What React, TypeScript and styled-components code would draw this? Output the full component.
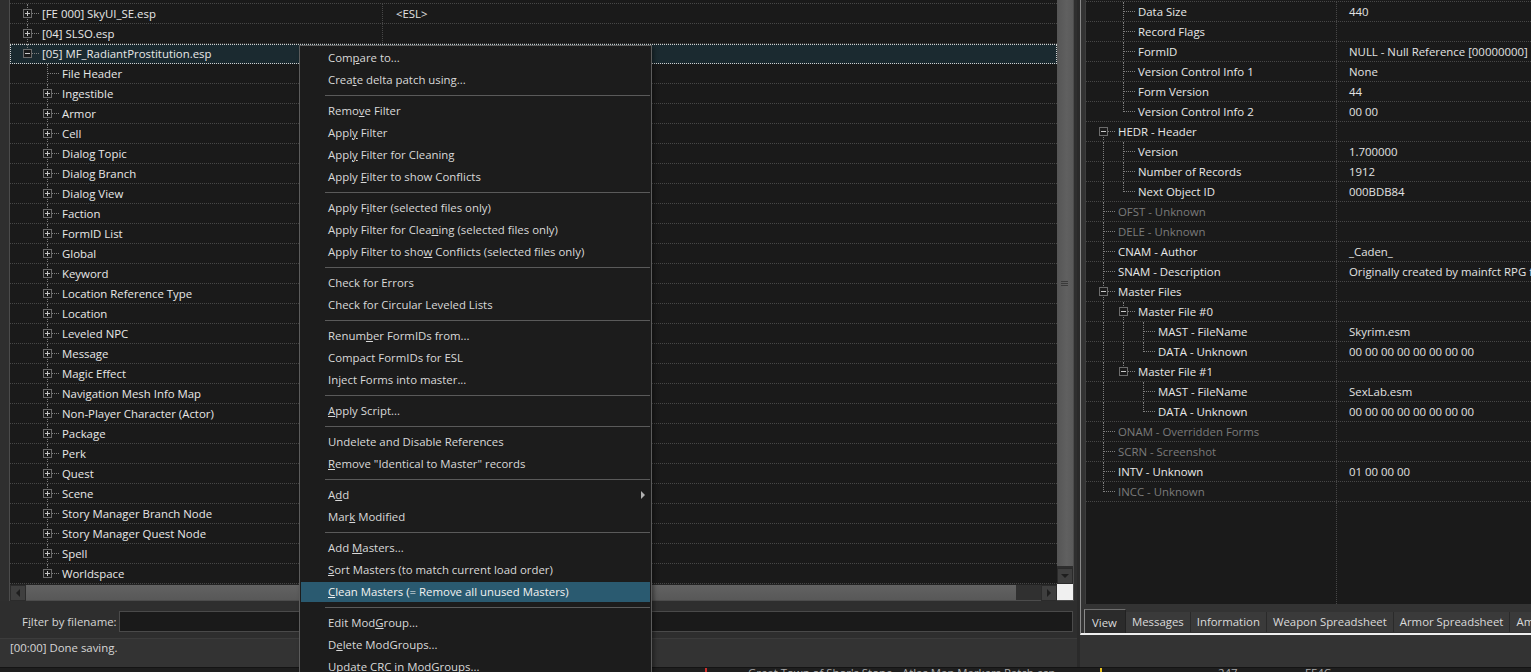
import React from 'react';
import styled, { createGlobalStyle, css } from 'styled-components';

const GlobalStyle = createGlobalStyle`
  html, body {
    margin: 0;
    padding: 0;
    background: #2f2f2f;
  }
  body {
    font-family: "Segoe UI", "Open Sans", "Noto Sans", sans-serif;
    font-size: 11.4px;
    color: #e4e4e4;
  }
  * {
    box-sizing: border-box;
  }
`;

const Window = styled.div`
  position: relative;
  width: 1531px;
  height: 672px;
  overflow: hidden;
  display: flex;
  flex-direction: column;
  background: #2f2f2f;
`;

const Main = styled.div`
  display: flex;
  height: 667px;
`;

const LeftPane = styled.div`
  flex: 0 0 1077px;
  display: flex;
  flex-direction: column;
`;

const Splitter = styled.div`
  flex: 0 0 3px;
  background: #2a2a2a;
`;

const RightColumn = styled.div`
  flex: 1;
  min-width: 0;
  overflow: hidden;
  display: flex;
  flex-direction: column;
  background: #333;
`;

const RightPane = styled.div`
  display: flex;
  flex-direction: column;
  border-left: 1px solid #8a8a8a;
  border-bottom: 2px solid #efefef;
  background: #333;
`;

const TreeFrame = styled.div`
  margin-left: 9px;
  width: 1065px;
  height: 601px;
  border: 1px solid #4c4c4c;
  border-top: none;
  display: grid;
  grid-template-columns: 1fr 16px;
  grid-template-rows: 1fr 16px;
`;

const TreeBody = styled.div`
  background: #1a1a1a;
  overflow: hidden;
  display: flex;
  flex-direction: column;
`;

const RightTree = styled(TreeBody)`
  margin-left: 4px;
  height: 604px;
  border-left: 1px solid #3e3e3e;
`;

const Spacer = styled.div<{ $h: number }>`
  flex: 0 0 auto;
  height: ${p => p.$h}px;
  border-bottom: 1px dotted #474747;
`;

const Row = styled.div<{ $nameWidth: number; $selected?: boolean }>`
  flex: 0 0 auto;
  display: grid;
  grid-template-columns: ${p => p.$nameWidth}px 1fr;
  height: 20px;
  border-bottom: 1px dotted #474747;
  white-space: nowrap;
  ${p =>
    p.$selected &&
    css`
      background: #1b2a30;
      outline: 1px dotted #cfcfcf;
      outline-offset: -1px;
    `}
`;

const NameCell = styled.div`
  display: flex;
  padding-left: 10px;
  overflow: hidden;
`;

const ValueCell = styled.div<{ $pad: number }>`
  display: flex;
  align-items: center;
  padding: 0 0 1px ${p => p.$pad}px;
  border-left: 1px dotted #474747;
  overflow: hidden;
  color: #e2e2e2;
`;

const Filler = styled.div<{ $nameWidth: number }>`
  flex: 1;
  display: grid;
  grid-template-columns: ${p => p.$nameWidth}px 1fr;
  & > div + div {
    border-left: 1px dotted #474747;
  }
`;

const Guide = styled.span<{ $line?: boolean }>`
  position: relative;
  flex: 0 0 20px;
  ${p =>
    p.$line &&
    css`
      &::before {
        content: '';
        position: absolute;
        left: 7px;
        top: 0;
        bottom: -1px;
        border-left: 1px dotted #7e7e7e;
      }
    `}
`;

const Knot = styled.span<{ $up: boolean; $down: boolean; $box: boolean }>`
  position: relative;
  flex: 0 0 20px;
  &::before {
    content: '';
    display: ${p => (p.$up || p.$down ? 'block' : 'none')};
    position: absolute;
    left: 7px;
    top: ${p => (p.$up ? '0' : '9px')};
    bottom: ${p => (p.$down ? '-1px' : '9px')};
    border-left: 1px dotted #7e7e7e;
  }
  &::after {
    content: '';
    position: absolute;
    left: ${p => (p.$box ? 12 : 8)}px;
    right: 1px;
    top: 9px;
    border-top: 1px dotted #7e7e7e;
  }
`;

const Expander = styled.span<{ $open: boolean }>`
  position: absolute;
  z-index: 1;
  left: 3px;
  top: 5px;
  width: 9px;
  height: 9px;
  border: 1px solid #6c6c6c;
  background: #1a1a1a;
  &::before {
    content: '';
    position: absolute;
    left: 1px;
    top: 3px;
    width: 5px;
    height: 1px;
    background: #c8c8c8;
  }
  &::after {
    content: '';
    display: ${p => (p.$open ? 'none' : 'block')};
    position: absolute;
    left: 3px;
    top: 1px;
    width: 1px;
    height: 5px;
    background: #c8c8c8;
  }
`;

const Label = styled.span<{ $dim?: boolean }>`
  align-self: center;
  margin: 0 0 1px 2px;
  color: ${p => (p.$dim ? '#7b7b7b' : '#e8e8e8')};
`;

/* scrollbars */

const VScroll = styled.div`
  display: flex;
  flex-direction: column;
  background: #2e2e2e;
`;

const HScroll = styled.div`
  display: flex;
  background: #2e2e2e;
  border-top: 1px solid #222;
`;

const Thumb = styled.div<{ $vertical?: boolean }>`
  position: relative;
  background: ${p =>
    p.$vertical
      ? 'linear-gradient(90deg, #555 0%, #606060 60%, #5a5a5a 100%)'
      : 'linear-gradient(180deg, #626262 0%, #585858 100%)'};
  ${p => (p.$vertical ? 'flex: 1; margin-bottom: 2px;' : 'flex: 0 0 990px;')}
`;

const Grip = styled.span`
  position: absolute;
  left: 4px;
  top: 50%;
  width: 7px;
  height: 5px;
  margin-top: -2px;
  border-top: 1px solid #3a3a3a;
  border-bottom: 1px solid #3a3a3a;
  &::after {
    content: '';
    position: absolute;
    left: 0;
    right: 0;
    top: 1px;
    border-top: 1px solid #3a3a3a;
  }
`;

const Track = styled.div`
  flex: 1;
  background: #303030;
`;

const ArrowButton = styled.div<{ $dir: 'left' | 'right' | 'down' }>`
  flex: 0 0 16px;
  height: 16px;
  display: flex;
  align-items: center;
  justify-content: center;
  background: #3f3f3f;
  border: 1px solid #2b2b2b;
  &::before {
    content: '';
    width: 0;
    height: 0;
    ${p =>
      p.$dir === 'down'
        ? css`
            border-left: 4px solid transparent;
            border-right: 4px solid transparent;
            border-top: 4px solid #1e1e1e;
          `
        : p.$dir === 'left'
        ? css`
            border-top: 4px solid transparent;
            border-bottom: 4px solid transparent;
            border-right: 4px solid #1e1e1e;
          `
        : css`
            border-top: 4px solid transparent;
            border-bottom: 4px solid transparent;
            border-left: 4px solid #1e1e1e;
          `}
  }
`;

const Corner = styled.div`
  background: #f0f0f0;
`;

/* filter + status */

const FilterBar = styled.div`
  height: 37px;
  display: flex;
  align-items: center;
  padding: 4px 4px 0 22px;
  gap: 2px;
  background: #2e2e2e;
  color: #d6d6d6;
`;

const FilterInput = styled.div`
  flex: 1;
  height: 21px;
  background: #1a1a1a;
  border: 1px solid #4a4a4a;
`;

const StatusBar = styled.div`
  flex: 1;
  border-top: 1px solid #3c3c3c;
  padding: 1px 0 0 10px;
  line-height: 16px;
  background: #333;
  color: #d6d6d6;
`;

/* tabs */

const TabBar = styled.div`
  height: 29px;
  display: flex;
  align-items: flex-end;
  padding-left: 3px;
  background: #333;
  overflow: hidden;
`;

const Tab = styled.div<{ $active?: boolean }>`
  flex: 0 0 auto;
  display: flex;
  align-items: center;
  white-space: nowrap;
  padding: 0 6px 1px;
  color: #dadada;
  ${p =>
    p.$active
      ? css`
          height: 24px;
          padding: 2px 8px 1px 7px;
          background: #2b2b2b;
          border-top: 1px solid #6e6e6e;
          border-left: 1px solid #8a8a8a;
          border-right: 1px solid #222;
        `
      : css`
          height: 20px;
          margin-bottom: 1px;
          background: #3a3a3a;
          border-right: 1px solid #2a2a2a;
        `}
`;

const BottomFill = styled.div`
  flex: 1;
  background: #333;
`;

/* task strip at very bottom */

const Strip = styled.div`
  height: 5px;
  display: flex;
  overflow: hidden;
  background: #1e1e1e;
  border-top: 1px solid #141414;
  color: #a8a8a8;
  line-height: 10px;
  white-space: nowrap;
`;

const StripCell = styled.span<{ $w: number; $mark?: string }>`
  flex: 0 0 ${p => p.$w}px;
  ${p =>
    p.$mark &&
    css`
      border-left: 2px solid ${p.$mark};
    `}
`;

/* context menu */

const Menu = styled.div`
  position: absolute;
  left: 299px;
  top: 45px;
  width: 353px;
  padding: 1px;
  background: #1c1c1c;
  border: 1px solid #5c5c5c;
  color: #d9d9d9;
  z-index: 10;
  box-shadow: 2px 2px 4px rgba(0, 0, 0, 0.4);
`;

const MenuItem = styled.div<{ $hot?: boolean }>`
  height: 22px;
  display: flex;
  align-items: center;
  justify-content: space-between;
  padding: 0 5px 2px 27px;
  white-space: nowrap;
  ${p =>
    p.$hot &&
    css`
      background: linear-gradient(transparent 1px, #2a5a70 1px, #2a5a70 21px, transparent 21px);
      color: #f2f2f2;
    `}
`;

const SubArrow = styled.span`
  width: 0;
  height: 0;
  margin-top: 2px;
  border-top: 4px solid transparent;
  border-bottom: 4px solid transparent;
  border-left: 4px solid #b0b0b0;
`;

const MenuSeparator = styled.div`
  height: 9px;
  display: flex;
  align-items: center;
  padding-left: 24px;
  &::after {
    content: '';
    flex: 1;
    border-top: 1px solid #5a5a5a;
  }
`;

/* data */

type TreeNode = {
  label: string;
  level: number;
  guides?: number[];
  up?: boolean;
  down?: boolean;
  box?: 'plus' | 'minus';
  value?: string;
  dim?: boolean;
  selected?: boolean;
};

const groups = [
  'File Header',
  'Ingestible',
  'Armor',
  'Cell',
  'Dialog Topic',
  'Dialog Branch',
  'Dialog View',
  'Faction',
  'FormID List',
  'Global',
  'Keyword',
  'Location Reference Type',
  'Location',
  'Leveled NPC',
  'Message',
  'Magic Effect',
  'Navigation Mesh Info Map',
  'Non-Player Character (Actor)',
  'Package',
  'Perk',
  'Quest',
  'Scene',
  'Story Manager Branch Node',
  'Story Manager Quest Node',
  'Spell',
  'Worldspace',
];

const fileTree: TreeNode[] = [
  { label: '[FE 000] SkyUI_SE.esp', level: 0, up: true, down: true, box: 'plus', value: '<ESL>' },
  { label: '[04] SLSO.esp', level: 0, up: true, down: true, box: 'plus' },
  { label: '[05] MF_RadiantProstitution.esp', level: 0, up: true, box: 'minus', selected: true },
  ...groups.map((g, i) => ({
    label: g,
    level: 1,
    up: true,
    down: i < groups.length - 1,
    box: i === 0 ? undefined : ('plus' as const),
  })),
];

const recordTree: TreeNode[] = [
  { label: 'Data Size', level: 1, up: true, down: true, value: '440' },
  { label: 'Record Flags', level: 1, up: true, down: true },
  { label: 'FormID', level: 1, up: true, down: true, value: 'NULL - Null Reference [00000000]' },
  { label: 'Version Control Info 1', level: 1, up: true, down: true, value: 'None' },
  { label: 'Form Version', level: 1, up: true, down: true, value: '44' },
  { label: 'Version Control Info 2', level: 1, up: true, value: '00 00' },
  { label: 'HEDR - Header', level: 0, down: true, box: 'minus' },
  { label: 'Version', level: 1, guides: [0], up: true, down: true, value: '1.700000' },
  { label: 'Number of Records', level: 1, guides: [0], up: true, down: true, value: '1912' },
  { label: 'Next Object ID', level: 1, guides: [0], up: true, value: '000BDB84' },
  { label: 'OFST - Unknown', level: 0, up: true, down: true, dim: true },
  { label: 'DELE - Unknown', level: 0, up: true, down: true, dim: true },
  { label: 'CNAM - Author', level: 0, up: true, down: true, value: '_Caden_' },
  {
    label: 'SNAM - Description',
    level: 0,
    up: true,
    down: true,
    value: 'Originally created by mainfct RPG for Oldrim, converted by _Caden_',
  },
  { label: 'Master Files', level: 0, up: true, down: true, box: 'minus' },
  { label: 'Master File #0', level: 1, guides: [0], up: true, down: true, box: 'minus' },
  { label: 'MAST - FileName', level: 2, guides: [0, 1], up: true, down: true, value: 'Skyrim.esm' },
  { label: 'DATA - Unknown', level: 2, guides: [0, 1], up: true, value: '00 00 00 00 00 00 00 00' },
  { label: 'Master File #1', level: 1, guides: [0], up: true, box: 'minus' },
  { label: 'MAST - FileName', level: 2, guides: [0], up: true, down: true, value: 'SexLab.esm' },
  { label: 'DATA - Unknown', level: 2, guides: [0], up: true, value: '00 00 00 00 00 00 00 00' },
  { label: 'ONAM - Overridden Forms', level: 0, up: true, down: true, dim: true },
  { label: 'SCRN - Screenshot', level: 0, up: true, down: true, dim: true },
  { label: 'INTV - Unknown', level: 0, up: true, down: true, value: '01 00 00 00' },
  { label: 'INCC - Unknown', level: 0, up: true, dim: true },
];

type MenuEntry = { text: string; hot?: boolean; sub?: boolean } | '-';

const menuEntries: MenuEntry[] = [
  { text: 'Com&pare to...' },
  { text: 'Crea&te delta patch using...' },
  '-',
  { text: 'Remo&ve Filter' },
  { text: 'Appl&y Filter' },
  { text: 'Appl&y Filter for Cleaning' },
  { text: 'Apply &Filter to show Conflicts' },
  '-',
  { text: 'Apply F&ilter (selected files only)' },
  { text: 'Apply Filter for Clea&ning (selected files only)' },
  { text: 'Apply Filter to sho&w Conflicts (selected files only)' },
  '-',
  { text: 'Check for Errors' },
  { text: 'Check for Circular Leveled Lists' },
  '-',
  { text: 'Renum&ber FormIDs from...' },
  { text: 'Compact FormIDs for ESL' },
  { text: 'Inject Forms into master...' },
  '-',
  { text: '&Apply Script...' },
  '-',
  { text: 'Undelete and Disable References' },
  { text: '&Remove "Identical to Master" records' },
  '-',
  { text: 'A&dd', sub: true },
  { text: 'Mar&k Modified' },
  '-',
  { text: 'Add &Masters...' },
  { text: '&Sort Masters (to match current load order)' },
  { text: '&Clean Masters (= Remove all unused Masters)', hot: true },
  '-',
  { text: 'Edit Mod&Group...' },
  { text: 'D&elete ModGroups...' },
  { text: '&Update CRC in ModGroups...' },
];

const tabs = ['View', 'Messages', 'Information', 'Weapon Spreadsheet', 'Armor Spreadsheet', 'Ammunition Spreadsheet'];

// "&x" marks the underlined access key, like a Windows menu caption
const Mnemonic: React.FC<{ text: string }> = ({ text }) => {
  const i = text.indexOf('&');
  if (i < 0) return <>{text}</>;
  return (
    <>
      {text.slice(0, i)}
      <u>{text.charAt(i + 1)}</u>
      {text.slice(i + 2)}
    </>
  );
};

const TreeRow: React.FC<{ node: TreeNode; nameWidth: number; valuePad: number }> = ({
  node,
  nameWidth,
  valuePad,
}) => {
  const guides = [];
  for (let i = 0; i < node.level; i++) {
    guides.push(<Guide key={i} $line={node.guides?.includes(i)} />);
  }
  return (
    <Row $nameWidth={nameWidth} $selected={node.selected}>
      <NameCell>
        {guides}
        <Knot $up={!!node.up} $down={!!node.down} $box={!!node.box}>
          {node.box && <Expander $open={node.box === 'minus'} />}
        </Knot>
        <Label $dim={node.dim}>{node.label}</Label>
      </NameCell>
      <ValueCell $pad={valuePad}>{node.value}</ValueCell>
    </Row>
  );
};

const ContextMenu: React.FC = () => (
  <Menu>
    {menuEntries.map((e, i) =>
      e === '-' ? (
        <MenuSeparator key={i} />
      ) : (
        <MenuItem key={i} $hot={e.hot}>
          <span>
            <Mnemonic text={e.text} />
          </span>
          {e.sub && <SubArrow />}
        </MenuItem>
      )
    )}
  </Menu>
);

export default function App() {
  return (
    <>
      <GlobalStyle />
      <Window>
        <Main>
          <LeftPane>
            <TreeFrame>
              <TreeBody>
                <Spacer $h={4} />
                {fileTree.map((n, i) => (
                  <TreeRow key={i} node={n} nameWidth={372} valuePad={13} />
                ))}
              </TreeBody>
              <VScroll>
                <Thumb $vertical>
                  <Grip />
                </Thumb>
                <ArrowButton $dir="down" />
              </VScroll>
              <HScroll>
                <ArrowButton $dir="left" />
                <Thumb />
                <Track />
                <ArrowButton $dir="right" />
              </HScroll>
              <Corner />
            </TreeFrame>
            <FilterBar>
              <span>
                <Mnemonic text="F&ilter by filename:" />
              </span>
              <FilterInput />
            </FilterBar>
            <StatusBar>[00:00] Done saving.</StatusBar>
          </LeftPane>
          <Splitter />
          <RightColumn>
            <RightPane>
              <RightTree>
                <Spacer $h={2} />
                {recordTree.map((n, i) => (
                  <TreeRow key={i} node={n} nameWidth={250} valuePad={12} />
                ))}
                <Filler $nameWidth={250}>
                  <div />
                  <div />
                </Filler>
              </RightTree>
              <TabBar>
                {tabs.map((t, i) => (
                  <Tab key={t} $active={i === 0}>
                    {t}
                  </Tab>
                ))}
              </TabBar>
            </RightPane>
            <BottomFill />
          </RightColumn>
        </Main>
        <Strip>
          <StripCell $w={705} />
          <StripCell $w={43} $mark="#d0312d" />
          <StripCell $w={352}>Great Town of Shor's Stone - Atlas Map Markers Patch.esp</StripCell>
          <StripCell $w={118} $mark="#e8c020" />
          <StripCell $w={87}>247</StripCell>
          <StripCell $w={60}>FE4C</StripCell>
        </Strip>
        <ContextMenu />
      </Window>
    </>
  );
}
